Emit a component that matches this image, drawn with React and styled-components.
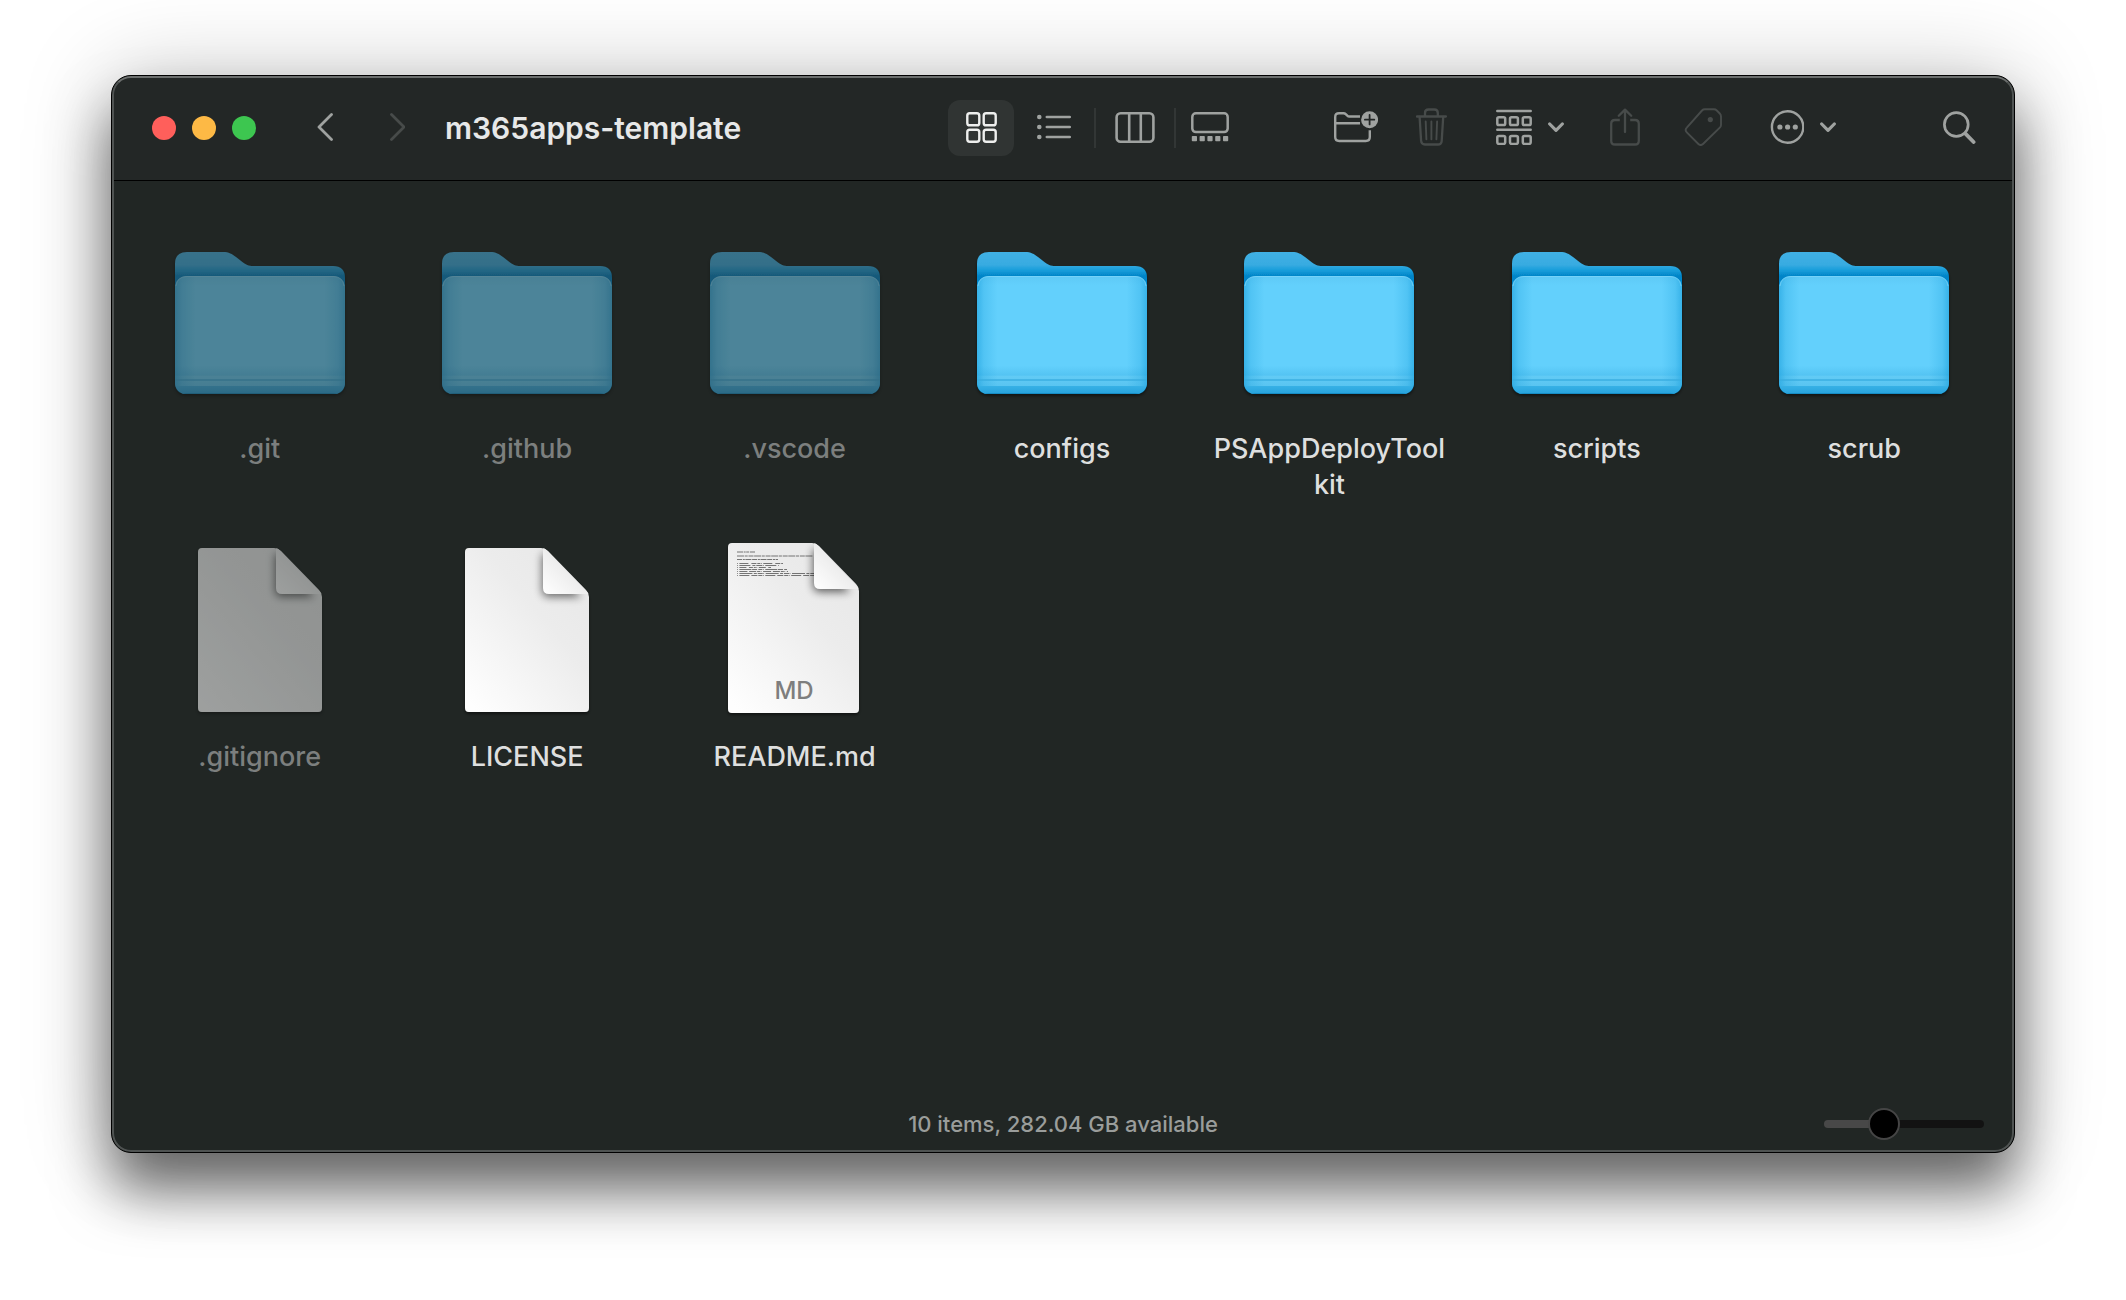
import React, { useState } from "react";
import styled, { createGlobalStyle } from "styled-components";

const GlobalStyle = createGlobalStyle`
  *, *::before, *::after { box-sizing: border-box; }
  body {
    margin: 0;
    background: #fff;
    font-family: Inter, "Liberation Sans", sans-serif;
    -webkit-font-smoothing: antialiased;
  }
`;

const Desktop = styled.div`
  display: flex;
  min-height: 100vh;
  padding: 75px 111px 147px;
`;

const Window = styled.main`
  flex: 1;
  display: flex;
  flex-direction: column;
  min-width: 0;
  border: 1px solid #000;
  border-radius: 20px;
  overflow: hidden;
  background: #212624;
  box-shadow: 0 38px 56px rgba(0, 0, 0, 0.55), 0 0 90px rgba(0, 0, 0, 0.22);
  position: relative;

  &::after {
    content: "";
    position: absolute;
    inset: 0;
    border: 2px solid #4f5352;
    border-top-color: #6c6f6e;
    border-radius: 19px;
    pointer-events: none;
  }
`;

const Toolbar = styled.header`
  display: flex;
  align-items: center;
  height: 105px;
  padding: 0 30px 0 40px;
  background: #232726;
  border-bottom: 1px solid #000;
`;

const Lights = styled.div`
  display: flex;
  gap: 16px;
  margin-right: 33px;
`;

const Light = styled.button`
  width: 24px;
  height: 24px;
  padding: 0;
  border: 0;
  border-radius: 50%;
  background: ${(p) => p.$color};
`;

const ToolButton = styled.button`
  display: flex;
  flex: none;
  align-items: center;
  justify-content: center;
  gap: 16px;
  width: ${(p) => p.$width}px;
  height: 56px;
  padding: 0 0 2px;
  border: 0;
  border-radius: 12px;
  background: ${(p) => (p.$active ? "#303433" : "transparent")};
  color: ${(p) => (p.$active ? "#eeefee" : "#9fa2a0")};

  &:disabled { color: #474b4a; }
  svg { display: block; flex: none; }
`;

const Title = styled.h1`
  flex: 1;
  min-width: 0;
  margin: 0 12px;
  overflow: hidden;
  white-space: nowrap;
  text-overflow: ellipsis;
  font-size: 30px;
  line-height: 40px;
  font-weight: 600;
  color: #e7e8e8;
`;

const Segments = styled.div`
  display: flex;
  align-items: center;
  margin-right: 78px;
`;

const Divider = styled.span`
  width: 2px;
  height: 40px;
  background: #323635;
`;

const Actions = styled.div`
  display: flex;
  align-items: center;
  gap: 20px;
  margin-right: 90px;
`;

const Files = styled.ul`
  flex: 1;
  display: grid;
  grid-template-columns: repeat(7, 1fr);
  align-content: start;
  row-gap: 40px;
  margin: 0;
  padding: 54px 16px 0 14px;
  list-style: none;
`;

const FileItem = styled.li`
  display: flex;
  flex-direction: column;
  align-items: center;
  gap: 26px;
`;

const Artwork = styled.svg`
  display: block;
  width: 190px;
  height: 170px;
  overflow: visible;
  opacity: ${(p) => (p.$dimmed ? 0.56 : 1)};
  filter: ${(p) => (p.$dimmed ? "saturate(0.88)" : "none")};
`;

const FileName = styled.span`
  width: 236px;
  min-height: 72px;
  text-align: center;
  word-break: break-all;
  font-size: 27px;
  line-height: 36px;
  font-weight: 500;
  color: ${(p) => (p.$dimmed ? "#7c7f7e" : "#dedfdf")};
`;

const StatusBar = styled.footer`
  display: grid;
  grid-template-columns: 1fr auto 1fr;
  align-items: center;
  height: 56px;
  padding: 0 30px;
`;

const StatusText = styled.p`
  grid-column: 2;
  margin: 0;
  font-size: 22px;
  line-height: 32px;
  font-weight: 500;
  color: #9a9d9b;
`;

const SizeSlider = styled.input`
  justify-self: end;
  appearance: none;
  width: 160px;
  height: 32px;
  margin: 0;
  background: transparent;

  &::-webkit-slider-runnable-track {
    height: 8px;
    border-radius: 4px;
    background: linear-gradient(to right, #484848 ${(p) => p.value}%, #121212 ${(p) => p.value}%);
  }
  &::-webkit-slider-thumb {
    appearance: none;
    width: 32px;
    height: 32px;
    margin-top: -12px;
    border: 2px solid #454545;
    border-radius: 50%;
    background: #000;
  }
`;

const stroke = {
  fill: "none",
  stroke: "currentColor",
  strokeLinecap: "round",
  strokeLinejoin: "round",
};

const ChevronLeft = () => (
  <svg width="16" height="28" viewBox="0 0 16 28" {...stroke} strokeWidth="2.8">
    <path d="M14.5 1.5 2 14l12.5 12.5" />
  </svg>
);

const ChevronRight = () => (
  <svg width="16" height="28" viewBox="0 0 16 28" {...stroke} strokeWidth="2.8">
    <path d="M2.5 1.5 15 14 2.5 26.5" />
  </svg>
);

const ChevronDown = () => (
  <svg width="16" height="10" viewBox="0 0 16 10" {...stroke} strokeWidth="3.2">
    <path d="m1.7 2 6.3 6.4L14.3 2" />
  </svg>
);

const GridIcon = () => (
  <svg width="31" height="31" viewBox="0 0 31 31" {...stroke} strokeWidth="2.4">
    {[1.3, 17.7].map((x) =>
      [1.3, 17.7].map((y) => (
        <rect key={`${x}-${y}`} x={x} y={y} width="12" height="12" rx="2.4" />
      ))
    )}
  </svg>
);

const ListIcon = () => (
  <svg width="34" height="26" viewBox="0 0 34 26" {...stroke} strokeWidth="2.6">
    {[3, 13, 23].map((y) => (
      <g key={y}>
        <circle cx="2.3" cy={y} r="2.3" fill="currentColor" stroke="none" />
        <path d={`M9.8 ${y}H32.8`} />
      </g>
    ))}
  </svg>
);

const ColumnsIcon = () => (
  <svg width="40" height="31" viewBox="0 0 40 31" {...stroke} strokeWidth="2.6">
    <rect x="1.6" y="1.3" width="36.8" height="28.4" rx="4" />
    <path d="M14.2 1.5v28M25.8 1.5v28" />
  </svg>
);

const GalleryIcon = () => (
  <svg width="38" height="30" viewBox="0 0 38 30" {...stroke} strokeWidth="2.5">
    <rect x="1.3" y="1.3" width="35.4" height="18.8" rx="3.6" />
    {[0, 1, 2, 3, 4].map((i) => (
      <rect key={i} x={0.8 + i * 7.8} y="24" width="5.2" height="5.2" rx="0.8" fill="currentColor" stroke="none" />
    ))}
  </svg>
);

const NewFolderIcon = () => (
  <svg width="44" height="32" viewBox="0 0 44 32" {...stroke} strokeWidth="2.4">
    <path strokeLinecap="butt" d="M26 5.5H15.5c-1.200 0-1.700-.4-2.500-1.200l-1-1C11.200 2.500 10.500 2.200 9.300 2.200H5C2.500 2.200 1.200 3.600 1.200 6v20c0 2.600 1.400 4 4 4h26.600c2.600 0 4-1.400 4-4v-6.800" />
    <path strokeLinecap="butt" d="M1.200 12.300H26" />
    <circle cx="35.6" cy="8.700" r="8.500" fill="currentColor" stroke="none" />
    <path d="M35.600 4v9.400M30.900 8.700h9.400" stroke="#232726" strokeWidth="1.8" />
  </svg>
);

const TrashIcon = () => (
  <svg width="32" height="38" viewBox="0.6 0 32 38" {...stroke} strokeWidth="2.3">
    <path d="M1.500 8.500h29M9.600 8V5c0-2.200 1.200-3.500 3.500-3.500h5.800c2.300 0 3.500 1.300 3.500 3.500v3" />
    <path d="m4.200 9 1.500 23.800c.2 2.500 1.400 3.700 3.800 3.700h13c2.400 0 3.600-1.200 3.800-3.700L27.800 9" />
    <path d="m10.300 13.500.7 17.800M16 13.500v17.800M21.700 13.500 21 31.300" strokeWidth="1.9" />
  </svg>
);

const GroupIcon = () => (
  <svg width="36" height="36" viewBox="0 0 36 36" {...stroke} strokeWidth="2.5">
    <path d="M1.300 2h33.400M1.300 20.800h33.400" />
    {[8.2, 27].map((y) =>
      [1.3, 14, 26.8].map((x) => (
        <rect key={`${x}-${y}`} x={x} y={y} width="7.900" height="7.900" rx="1.600" />
      ))
    )}
  </svg>
);

const ShareIcon = () => (
  <svg width="30" height="38" viewBox="0 0 30 38" {...stroke} strokeWidth="2.3">
    <path strokeLinecap="butt" d="M9.800 12H5c-2.500 0-3.800 1.300-3.800 3.800v16.900c0 2.500 1.300 3.800 3.800 3.800h20c2.500 0 3.800-1.300 3.800-3.800V15.800c0-2.500-1.300-3.800-3.800-3.800h-4.800" />
    <path d="M15 24V1.800M8.800 7.800 15 1.600l6.200 6.200" />
  </svg>
);

const TagIcon = () => (
  <svg width="38" height="38" viewBox="-0.6 0 38 38" {...stroke} strokeWidth="1.9">
    <path d="M20.300 1.300h9c1.300 0 2 .3 2.900 1.200l3 3c.9.9 1.200 1.600 1.200 2.900v8.500c0 1.200-.3 1.900-1.200 2.800L18.400 36c-1.600 1.500-3 1.500-4.600 0L2.200 24.300c-1.600-1.600-1.600-3 0-4.600L17.400 2.500c.9-.9 1.600-1.200 2.900-1.200Z" />
    <circle cx="25.7" cy="11.6" r="2.6" fill="currentColor" stroke="none" />
  </svg>
);

const MoreIcon = () => (
  <svg width="34" height="34" viewBox="-0.6 0 34 34" {...stroke} strokeWidth="2.4">
    <circle cx="17" cy="17" r="15.700" />
    {[9.3, 17, 24.7].map((x) => (
      <circle key={x} cx={x} cy="17" r="2.600" fill="currentColor" stroke="none" />
    ))}
  </svg>
);

const SearchIcon = () => (
  <svg width="33" height="33" viewBox="0 0 33 33" {...stroke} strokeWidth="2.7">
    <circle cx="13.3" cy="13.5" r="11.9" />
    <path d="m22.400 22.700 8.200 8.300" strokeWidth="3.8" />
  </svg>
);

const Definitions = () => (
  <svg width="0" height="0" style={{ position: "absolute" }} aria-hidden="true">
    <defs>
      <linearGradient id="folderBack" x1="0" y1="0" x2="0" y2="1">
        <stop offset="0" stopColor="#40b0e4" />
        <stop offset="0.09" stopColor="#38abe1" />
        <stop offset="0.13" stopColor="#169dda" />
        <stop offset="0.17" stopColor="#0084c8" />
        <stop offset="1" stopColor="#0e8fcd" />
      </linearGradient>
      <linearGradient id="folderFront" x1="0" y1="0" x2="0" y2="1">
        <stop offset="0" stopColor="#5ec9f6" />
        <stop offset="0.08" stopColor="#63d0fc" />
        <stop offset="0.76" stopColor="#63d0fc" />
        <stop offset="0.84" stopColor="#54c4f3" />
        <stop offset="0.85" stopColor="#62cbf5" />
        <stop offset="1" stopColor="#52bfee" />
      </linearGradient>
      <linearGradient id="folderSides" x1="0" y1="0" x2="1" y2="0">
        <stop offset="0" stopColor="#1a9fdc" stopOpacity="0.6" />
        <stop offset="0.04" stopColor="#1a9fdc" stopOpacity="0.25" />
        <stop offset="0.12" stopColor="#1a9fdc" stopOpacity="0" />
        <stop offset="0.88" stopColor="#1a9fdc" stopOpacity="0" />
        <stop offset="0.96" stopColor="#1a9fdc" stopOpacity="0.25" />
        <stop offset="1" stopColor="#1a9fdc" stopOpacity="0.6" />
      </linearGradient>
      <linearGradient id="folderBase" x1="0" y1="0" x2="0" y2="1">
        <stop offset="0" stopColor="#37b1e6" />
        <stop offset="1" stopColor="#27a2dc" />
      </linearGradient>
      <linearGradient id="paper" x1="0.1" y1="1" x2="0.9" y2="0.1">
        <stop offset="0" stopColor="#fefefe" />
        <stop offset="0.65" stopColor="#ececec" />
        <stop offset="1" stopColor="#e8e8e8" />
      </linearGradient>
      <linearGradient id="paperFold" x1="0" y1="1" x2="0.5" y2="0.5">
        <stop offset="0" stopColor="#fff" />
        <stop offset="1" stopColor="#ededed" />
      </linearGradient>
      <filter id="dropShadow" x="-10%" y="-10%" width="120%" height="125%">
        <feDropShadow dx="0" dy="2" stdDeviation="1.6" floodColor="#000" floodOpacity="0.5" />
      </filter>
      <filter id="foldShadow" x="-60%" y="-60%" width="220%" height="220%">
        <feGaussianBlur stdDeviation="4" />
      </filter>
      <clipPath id="pageClip">
        <path d="M4 0H76q4 0 7 3L121 42q3 3 3 7V160q0 4-4 4H4q-4 0-4-4V4q0-4 4-4Z" />
      </clipPath>
      <clipPath id="previewClip">
        <path d="M4 0H84q4 0 7 3L128 41q3 3 3 7V166q0 4-4 4H4q-4 0-4-4V4q0-4 4-4Z" />
      </clipPath>
      <clipPath id="frontClip">
        <rect x="0" y="24" width="170" height="118" rx="12" />
      </clipPath>
    </defs>
  </svg>
);

const FolderArt = ({ dimmed }) => (
  <Artwork viewBox="-10 -17 190 170" $dimmed={dimmed} aria-hidden="true">
    <path
      d="M12 0H48c6 0 9 2 13 5l7 5.500c4 3 7 3.500 12 3.500H158q12 0 12 12V130q0 12-12 12H12q-12 0-12-12V12Q0 0 12 0Z"
      fill="url(#folderBack)"
      filter="url(#dropShadow)"
    />
    <g clipPath="url(#frontClip)">
      <rect y="24" width="170" height="118" fill="url(#folderFront)" />
      <rect y="24" width="170" height="118" fill="url(#folderSides)" />
      <rect y="127" width="170" height="2" fill="#37ade0" opacity="0.7" />
      <rect y="134" width="170" height="8" fill="url(#folderBase)" />
      <rect y="141" width="170" height="1" fill="#168dc4" />
    </g>
    <path d="M1 34q1-9.500 11-9.500H158q10 0 11 9.500" fill="none" stroke="#7fd6f9" opacity="0.7" />
  </Artwork>
);

const PageArt = ({ dimmed }) => (
  <Artwork viewBox="-33 -5 190 170" $dimmed={dimmed} aria-hidden="true">
    <g filter="url(#dropShadow)">
      <g clipPath="url(#pageClip)">
        <rect width="124" height="164" fill="url(#paper)" />
        <path d="M77 6V42q0 7 7 7H116L84 6Z" fill="#000" opacity="0.55" filter="url(#foldShadow)" />
        <path d="M78 0V40q0 6 6 6H124L80 0Z" fill="url(#paperFold)" />
      </g>
    </g>
  </Artwork>
);

const previewLines = [
  { y: 9, width: 18, dash: "6 0.7 2 0.5 3 0.8" },
  { y: 13, width: 76, dash: "7 0.7 3 0.8 5 0.6" },
  { y: 16.5, width: 41, dash: "5 0.8 2 0.6 6 0.7" },
  { y: 20.5, width: 46, dash: "0.8 1.6 9 3 5 0.9 3 0.6" },
  { y: 22.5, width: 42, dash: "0.8 1.6 11 2 3 0.9 6 0.6" },
  { y: 24.5, width: 34, dash: "0.8 1.6 7 2.500 4 0.9 2 0.6" },
  { y: 26.5, width: 50, dash: "0.8 1.6 12 0.7 5 1.200 4 0.6" },
  { y: 28.5, width: 51, dash: "0.8 1.6 8 1.800 7 0.9 3 0.6" },
  { y: 30.5, width: 80, dash: "0.8 1.6 13 1.400 3 0.9 5 0.6" },
  { y: 32.5, width: 80, dash: "0.8 1.6 10 2 6 0.9 4 0.6" },
];

const MarkdownArt = ({ dimmed }) => (
  <Artwork viewBox="-28 0 190 170" $dimmed={dimmed} aria-hidden="true">
    <g filter="url(#dropShadow)">
      <g clipPath="url(#previewClip)">
        <rect width="131" height="170" fill="url(#paper)" />
        {previewLines.map(({ y, width, dash }) => (
          <path
            key={y}
            d={`M9 ${y}H${9 + width}`}
            stroke="#333"
            strokeWidth="1"
            strokeDasharray={dash}
            opacity="0.65"
          />
        ))}
        <path d="M85 6V42q0 7 7 7H122L90 6Z" fill="#000" opacity="0.6" filter="url(#foldShadow)" />
        <path d="M86 0V40q0 6 6 6H131L88 0Z" fill="url(#paperFold)" />
      </g>
    </g>
    <text x="66" y="156" textAnchor="middle" fontFamily="Inter, sans-serif" fontSize="24" fontWeight="500" fill="#7e7e7e">
      MD
    </text>
  </Artwork>
);

const artwork = { folder: FolderArt, page: PageArt, markdown: MarkdownArt };

const files = [
  { name: ".git", kind: "folder", hidden: true },
  { name: ".github", kind: "folder", hidden: true },
  { name: ".vscode", kind: "folder", hidden: true },
  { name: "configs", kind: "folder" },
  { name: "PSAppDeployToolkit", kind: "folder" },
  { name: "scripts", kind: "folder" },
  { name: "scrub", kind: "folder" },
  { name: ".gitignore", kind: "page", hidden: true },
  { name: "LICENSE", kind: "page" },
  { name: "README.md", kind: "markdown" },
];

export default function App() {
  const [size, setSize] = useState(34);

  return (
    <>
      <GlobalStyle />
      <Definitions />
      <Desktop>
        <Window>
          <Toolbar>
            <Lights>
              <Light $color="#ff5f5b" aria-label="Close" />
              <Light $color="#fdb945" aria-label="Minimize" />
              <Light $color="#3dc650" aria-label="Zoom" />
            </Lights>
            <ToolButton $width={72} aria-label="Back"><ChevronLeft /></ToolButton>
            <ToolButton $width={72} aria-label="Forward" disabled><ChevronRight /></ToolButton>
            <Title>m365apps-template</Title>
            <Segments role="group" aria-label="View">
              <ToolButton $width={66} $active aria-label="Icons" aria-pressed="true"><GridIcon /></ToolButton>
              <ToolButton $width={80} aria-label="List"><ListIcon /></ToolButton>
              <Divider />
              <ToolButton $width={78} aria-label="Columns"><ColumnsIcon /></ToolButton>
              <Divider />
              <ToolButton $width={68} aria-label="Gallery"><GalleryIcon /></ToolButton>
            </Segments>
            <Actions>
              <ToolButton $width={68} aria-label="New folder"><NewFolderIcon /></ToolButton>
              <ToolButton $width={44} aria-label="Delete" disabled><TrashIcon /></ToolButton>
              <ToolButton $width={112} aria-label="Group by"><GroupIcon /><ChevronDown /></ToolButton>
              <ToolButton $width={38} aria-label="Share" disabled><ShareIcon /></ToolButton>
              <ToolButton $width={78} aria-label="Edit tags" disabled><TagIcon /></ToolButton>
              <ToolButton $width={82} aria-label="More actions"><MoreIcon /><ChevronDown /></ToolButton>
            </Actions>
            <ToolButton $width={50} aria-label="Search"><SearchIcon /></ToolButton>
          </Toolbar>
          <Files>
            {files.map(({ name, kind, hidden }) => {
              const Art = artwork[kind];
              return (
                <FileItem key={name}>
                  <Art dimmed={hidden} />
                  <FileName $dimmed={hidden}>{name}</FileName>
                </FileItem>
              );
            })}
          </Files>
          <StatusBar>
            <StatusText>10 items, 282.04 GB available</StatusText>
            <SizeSlider
              type="range"
              min="0"
              max="100"
              value={size}
              onChange={(e) => setSize(Number(e.target.value))}
              aria-label="Icon size"
            />
          </StatusBar>
        </Window>
      </Desktop>
    </>
  );
}
